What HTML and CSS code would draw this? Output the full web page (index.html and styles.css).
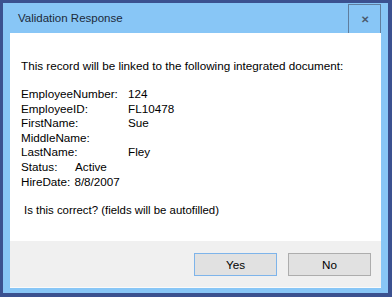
FILE: index.html
```html
<!DOCTYPE html>
<html lang="en">
<head>
    <meta charset="UTF-8">
    <title>Validation Response</title>
    <link rel="stylesheet" href="styles.css">
</head>
<body>
    <div class="frame">
        <div class="titlebar">
            <span class="title">Validation Response</span>
            <div class="close">&#10005;</div>
        </div>
        <div class="content">
            <p class="intro">This record will be linked to the following integrated document:</p>
            <div class="fields">
                <div class="row"><span class="label">EmployeeNumber:</span><span>124</span></div>
                <div class="row"><span class="label">EmployeeID:</span><span>FL10478</span></div>
                <div class="row"><span class="label">FirstName:</span><span>Sue</span></div>
                <div class="row"><span class="label">MiddleName:</span><span></span></div>
                <div class="row"><span class="label">LastName:</span><span>Fley</span></div>
                <div class="row"><span class="label short">Status:</span><span>Active</span></div>
                <div class="row"><span class="label shorter">HireDate:</span><span>8/8/2007</span></div>
            </div>
            <p class="question">Is this correct? (fields will be autofilled)</p>
        </div>
        <div class="footer">
            <button class="btn focused">Yes</button>
            <button class="btn">No</button>
        </div>
    </div>
</body>
</html>
```

FILE: styles.css
```css
body {
    margin: 0;
    background: #3b5190;
    font-family: 'Liberation Sans', Arial, sans-serif;
    font-size: 11.7px;
    color: #000;
}
.frame {
    margin: 3px 4px 4px 3px;
    height: 290px;
    box-sizing: border-box;
    background: #88c6f6;
    padding: 0 7px 5px 7px;
    display: flex;
    flex-direction: column;
}
.titlebar {
    height: 30px;
    display: flex;
    align-items: center;
    justify-content: space-between;
}
.title {
    margin-left: 8px;
    color: #1c2a3a;
    font-size: 11.5px;
}
.close {
    width: 31px;
    height: 28px;
    margin-top: 1px;
    border: 1px solid #5f7d9d;
    border-bottom: none;
    display: flex;
    align-items: center;
    justify-content: center;
    color: #4b5b6e;
    font-size: 10px;
    font-weight: bold;
}
.content {
    height: 208px;
    background: #fff;
    padding: 0 11px;
    overflow: hidden;
}
.intro {
    margin: 26px 0 0 0;
    line-height: 14px;
}
.fields {
    margin-top: 14px;
    line-height: 14.6px;
}
.row {
    display: flex;
    white-space: nowrap;
}
.label {
    width: 107px;
    flex-shrink: 0;
}
.label.short {
    width: 54px;
}
.label.shorter {
    width: auto;
    margin-right: 4px;
}
.question {
    margin: 15px 0 0 3px;
    font-size: 11.4px;
}
.footer {
    flex: 1;
    background: #f0f0f0;
    display: flex;
    justify-content: flex-end;
    align-items: flex-start;
    padding: 12px 10px 0 0;
    gap: 11px;
    border-bottom: 1px solid #fafafa;
}
.btn {
    width: 83px;
    height: 23px;
    font-family: 'Liberation Sans', Arial, sans-serif;
    font-size: 11.7px;
    background: #e1e1e1;
    border: 1px solid #adadad;
    color: #000;
    padding: 0;
}
.btn.focused {
    border-color: #7eb4ea;
}
```
